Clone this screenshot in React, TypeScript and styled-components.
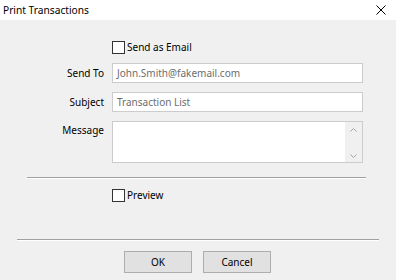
import React from "react";
import styled, { createGlobalStyle } from "styled-components";

const Global = createGlobalStyle`
  html, body { margin: 0; padding: 0; background: #f0f0f0; }
  body { font-family: "Noto Sans", "Segoe UI", sans-serif; }
  * { box-sizing: border-box; }
`;

const Window = styled.div`
  width: 396px;
  height: 280px;
  background: #f0f0f0;
  display: flex;
  flex-direction: column;
  overflow: hidden;
  font-size: 10px;
  color: #000;
`;

const TitleBar = styled.div`
  height: 20px;
  background: #fff;
  display: flex;
  align-items: center;
  justify-content: space-between;
  padding: 0 6px 0 3px;
  font-size: 10.2px;
`;

const CloseIcon = styled.svg`
  width: 10px;
  height: 10px;
  margin-right: 4px;
`;

const Body = styled.div`
  display: flex;
  flex-direction: column;
  padding-top: 21px;
`;

const CheckRow = styled.label<{ $mt?: number }>`
  display: flex;
  align-items: center;
  gap: 2px;
  margin-left: 112px;
  margin-top: ${(p) => p.$mt ?? 0}px;
  height: 13px;
  line-height: 13px;
`;

const Box = styled.span`
  width: 13px;
  height: 13px;
  border: 1px solid #333;
  background: #fff;
`;

const Form = styled.div`
  display: grid;
  grid-template-columns: 104px 251px;
  column-gap: 8px;
  row-gap: 9px;
  margin-top: 9px;
`;

const Label = styled.div<{ $top?: boolean }>`
  text-align: right;
  align-self: ${(p) => (p.$top ? "start" : "center")};
  padding-top: ${(p) => (p.$top ? "2px" : "0")};
`;

const Field = styled.div`
  height: 20px;
  border: 1px solid #cccccc;
  background: #fff;
  color: #6d6d6d;
  padding: 0 4px;
  display: flex;
  align-items: center;
`;

const Memo = styled.div`
  height: 42px;
  border: 1px solid #cccccc;
  background: #fff;
  display: flex;
  justify-content: flex-end;
`;

const ScrollBar = styled.div`
  width: 17px;
  background: #f0f0f0;
  display: flex;
  flex-direction: column;
  justify-content: space-between;
  align-items: center;
  padding: 6px 0 4px;
`;

const Separator = styled.div<{ $left: number; $right: number; $mt: number }>`
  height: 2px;
  margin: ${(p) => `${p.$mt}px ${p.$right}px 0 ${p.$left}px`};
  border-top: 1px solid #a0a0a0;
  border-bottom: 1px solid #ffffff;
`;

const Buttons = styled.div`
  display: flex;
  gap: 11px;
  margin-left: 124px;
  margin-top: 10px;
`;

const Button = styled.button`
  width: 68px;
  height: 22px;
  background: #e1e1e1;
  border: 1px solid #adadad;
  font-family: inherit;
  font-size: 10px;
  color: #000;
  padding: 0;
`;

const Chevron = ({ up }: { up?: boolean }) => (
  <svg width="7" height="4" viewBox="0 0 7 4">
    <path
      d={up ? "M0.5 3.5 L3.5 0.5 L6.5 3.5" : "M0.5 0.5 L3.5 3.5 L6.5 0.5"}
      fill="none"
      stroke="#a3a3a3"
      strokeWidth="1"
    />
  </svg>
);

export default function App() {
  return (
    <Window>
      <Global />
      <TitleBar>
        <span>Print Transactions</span>
        <CloseIcon viewBox="0 0 10 10">
          <path d="M0.5 0.5 L9.5 9.5 M9.5 0.5 L0.5 9.5" stroke="#000" strokeWidth="1" />
        </CloseIcon>
      </TitleBar>
      <Body>
        <CheckRow>
          <Box />
          <span>Send as Email</span>
        </CheckRow>
        <Form>
          <Label>Send To</Label>
          <Field>John.Smith@fakemail.com</Field>
          <Label>Subject</Label>
          <Field>Transaction List</Field>
          <Label $top>Message</Label>
          <Memo>
            <ScrollBar>
              <Chevron up />
              <Chevron />
            </ScrollBar>
          </Memo>
        </Form>
        <Separator $left={27} $right={30} $mt={14} />
        <CheckRow $mt={10}>
          <Box />
          <span>Preview</span>
        </CheckRow>
        <Separator $left={17} $right={17} $mt={37} />
        <Buttons>
          <Button>OK</Button>
          <Button>Cancel</Button>
        </Buttons>
      </Body>
    </Window>
  );
}
